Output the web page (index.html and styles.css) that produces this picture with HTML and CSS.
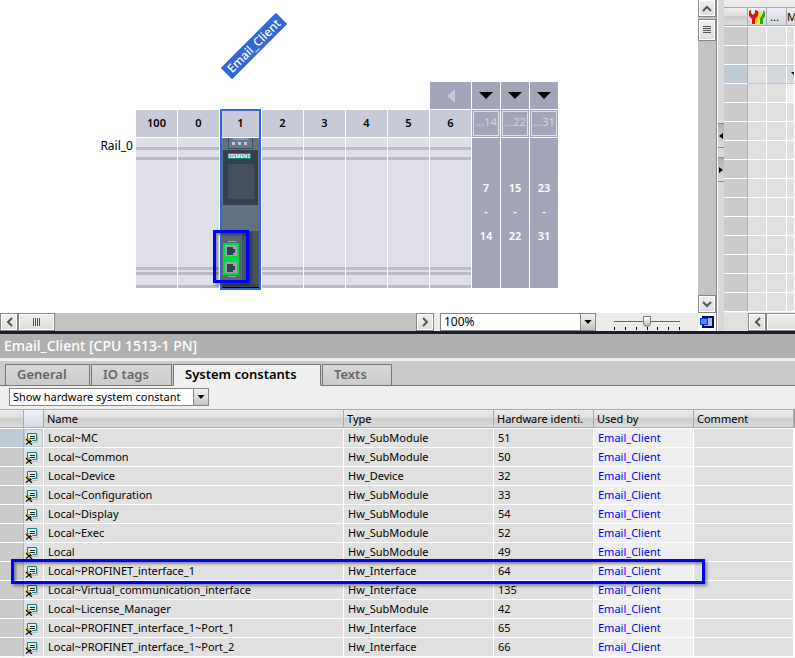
FILE: index.html
```html
<!DOCTYPE html>
<html lang="en">
<head>
    <meta charset="UTF-8">
    <meta name="viewport" content="width=device-width, initial-scale=1.0">
    <title>Device configuration</title>
    <link rel="stylesheet" href="styles.css">
</head>
<body>
    <svg class="defs" aria-hidden="true">
        <symbol id="const" viewBox="0 0 14 14">
            <path d="M5 11.500h7.500V4" fill="none" stroke="#b9b9b9"/>
            <path d="M2.500 2.500h9v7h-4l-2 2v-2h-3z" fill="#e4eeee" stroke="#12807f"/>
            <path d="M5 5h5v1H5zM5 7h5v1H5z" fill="#222"/>
            <path d="M3 7h2v4H3zM1 8h2v2H1z" fill="#f2c200"/>
            <path d="M1 8l6 6M1 13.500l5-4" stroke="#111" stroke-width="1.300" fill="none"/>
        </symbol>
        <symbol id="down" viewBox="0 0 9 5"><path d="M0 0h9L4.500 5z"/></symbol>
    </svg>

    <div class="workspace">
        <div class="canvas">
            <div class="device-name">Email_Client</div>
            <div class="rail-name">Rail_0</div>
            <div class="rack">
                <button class="pager prev" aria-label="Previous slots"><svg width="8" height="14"><path d="M8 0v14L0 7z"/></svg></button>
                <button class="pager" aria-label="Slots 7 to 14"><svg width="14" height="7"><path d="M0 0h14L7 7z"/></svg></button>
                <button class="pager" aria-label="Slots 15 to 22"><svg width="14" height="7"><path d="M0 0h14L7 7z"/></svg></button>
                <button class="pager" aria-label="Slots 23 to 31"><svg width="14" height="7"><path d="M0 0h14L7 7z"/></svg></button>

                <div class="slot first">100</div>
                <div class="slot">0</div>
                <div class="slot">1</div>
                <div class="slot">2</div>
                <div class="slot">3</div>
                <div class="slot">4</div>
                <div class="slot">5</div>
                <div class="slot">6</div>
                <div class="range-head">...14</div>
                <div class="range-head">...22</div>
                <div class="range-head">...31</div>

                <div class="bay first"></div>
                <div class="bay"></div>
                <div class="bay module">
                    <svg width="37" height="150" viewBox="0 0 37 150" shape-rendering="crispEdges">
                        <path d="M0 0h37v150H0z" fill="#617382"/>
                        <path d="M6 0h25v11H6z" fill="#435260"/>
                        <path d="M7 0h23v10H7z" fill="#66798a"/>
                        <path d="M11 0h15v2H11z" fill="#8f9bab"/>
                        <path d="M10 4h3v3h-3zM16 4h3v3h-3zM22 4h3v3h-3z" fill="#c3c7d3"/>
                        <path d="M1 12h35v55H1z" fill="#363f50"/>
                        <path d="M6 15h23v6H6z" fill="#138585"/>
                        <text x="17" y="20" class="brand">SIEMENS</text>
                        <path d="M6 26h26v35H6z" fill="#454f60"/>
                        <path d="M0 93h20v53H0z" fill="#586873"/>
                        <path d="M20 93h17v53H20z" fill="#465461"/>
                        <path d="M0 146h37v3H0z" fill="#3b4754"/>
                        <path d="M0 149h37v1H0z" fill="#000"/>
                        <path d="M6 103h8v1H6zM6 138h8v1H6z" fill="#98a3aa"/>
                        <path d="M1 105h16v32H1z" fill="#00da3c"/>
                        <path d="M3 107h12v11H3zM3 124h12v11H3z" fill="#98a3b0"/>
                        <path d="M5 109h6v2h2v4h-2v2H5zM5 126h6v2h2v4h-2v2H5z" fill="#363f50"/>
                    </svg>
                </div>
                <div class="bay"></div>
                <div class="bay"></div>
                <div class="bay"></div>
                <div class="bay"></div>
                <div class="bay"></div>
                <div class="range"><span>7</span><span>-</span><span>14</span></div>
                <div class="range"><span>15</span><span>-</span><span>22</span></div>
                <div class="range"><span>23</span><span>-</span><span>31</span></div>
                <div class="selection"></div>
            </div>
            <div class="mark port-mark"></div>
        </div>

        <div class="vscroll">
            <button class="sb-btn up" aria-label="Scroll up"><svg width="10" height="7"><path d="M1 6l4-4 4 4"/></svg></button>
            <button class="sb-btn vthumb" aria-label="Scroll thumb"><svg class="grip" width="8" height="8"><path d="M0 .5h8M0 2.500h8M0 4.500h8M0 6.500h8"/></svg></button>
            <button class="sb-btn last" aria-label="Scroll down"><svg width="10" height="7"><path d="M1 1l4 4 4-4"/></svg></button>
        </div>

        <div class="footbar">
            <div class="hscroll">
                <button class="sb-btn" aria-label="Scroll left"><svg width="7" height="10"><path d="M6 1L2 5l4 4"/></svg></button>
                <button class="sb-btn hthumb" aria-label="Scroll thumb"><svg class="grip" width="8" height="8"><path d="M.5 0v8M2.500 0v8M4.500 0v8M6.500 0v8"/></svg></button>
                <button class="sb-btn last" aria-label="Scroll right"><svg width="7" height="10"><path d="M1 1l4 4-4 4"/></svg></button>
            </div>
            <div class="combo zoom">
                <select aria-label="Zoom"><option>100%</option></select>
                <span class="combo-arrow"><svg width="8" height="4"><use href="#down"/></svg></span>
            </div>
            <div class="slider">
                <input type="range" min="0" max="100" value="50" aria-label="Zoom level">
                <svg width="66" height="3" shape-rendering="crispEdges"><path d="M0 0h1v3H0zM11 0h1v3h-1zM22 0h1v3h-1zM33 0h1v3h-1zM43 0h1v3h-1zM54 0h1v3h-1zM65 0h1v3h-1z"/></svg>
            </div>
        </div>
        <button class="overview" aria-label="Overview">
            <svg width="16" height="15" shape-rendering="crispEdges"><path d="M3 1h12v12H3z" fill="#00105c"/><path d="M5 3h8v8H5z" fill="#b3bfe3"/><path d="M1 3h8v7H1z" fill="#0a2fff"/><path d="M2 4h6v5H2z" fill="#5f86f5"/></svg>
        </button>

        <div class="splitter">
            <button aria-label="Collapse left"><svg width="4" height="6"><path d="M4 0v6L0 3z"/></svg></button>
            <button aria-label="Collapse right"><svg width="4" height="6"><path d="M0 0v6l4-3z"/></svg></button>
        </div>

        <div class="overview-pane">
            <table class="modules">
                <colgroup><col class="c-mgutter"><col class="c-mstate"><col class="c-mstate2"><col></colgroup>
                <thead>
                    <tr>
                        <th></th>
                        <th>
                            <svg width="16" height="16" viewBox="0 0 16 16">
                                <path d="M10 1v4l2 1 2-1V1l2 2v4l-2 3v5h-3v-5l-2-3z" fill="#1fa31f"/>
                                <path d="M6 1v4l2 1 2-1V1l3 2v4l-3 3v5H7v-5L5 7z" fill="#ffe000"/>
                                <path d="M2 1v3l2 2 2-2V1l3 1v5l-3 3v5H3v-5L0 7V2z" fill="#dc1111"/>
                            </svg>
                        </th>
                        <th>...</th>
                        <th>M</th>
                    </tr>
                </thead>
                <tbody>
                    <tr><td></td><td></td><td></td><td></td></tr>
                    <tr><td></td><td></td><td></td><td></td></tr>
                    <tr class="current"><td></td><td></td><td></td><td><svg width="9" height="5"><use href="#down"/></svg></td></tr>
                    <tr><td></td><td></td><td></td><td class="editable"></td></tr>
                    <tr><td></td><td></td><td></td><td></td></tr>
                    <tr><td></td><td></td><td></td><td></td></tr>
                    <tr><td></td><td></td><td></td><td></td></tr>
                    <tr><td></td><td></td><td></td><td></td></tr>
                    <tr><td></td><td></td><td></td><td></td></tr>
                    <tr><td></td><td></td><td></td><td></td></tr>
                    <tr><td></td><td></td><td></td><td></td></tr>
                    <tr><td></td><td></td><td></td><td></td></tr>
                    <tr><td></td><td></td><td></td><td></td></tr>
                    <tr><td></td><td></td><td></td><td></td></tr>
                    <tr><td></td><td></td><td></td><td></td></tr>
                </tbody>
            </table>
            <div class="pane-scroll">
                <button class="sb-btn" aria-label="Scroll left"><svg width="7" height="10"><path d="M6 1L2 5l4 4"/></svg></button>
                <button class="sb-btn hthumb" aria-label="Scroll thumb"></button>
            </div>
        </div>
    </div>

    <div class="inspector">
        <div class="title">Email_Client [CPU 1513-1 PN]</div>
        <div class="tabs">
            <button class="tab t-general">General</button>
            <button class="tab t-io">IO tags</button>
            <button class="tab t-const active">System constants</button>
            <button class="tab t-texts">Texts</button>
        </div>
        <div class="toolbar">
            <div class="combo filter">
                <select aria-label="Filter"><option>Show hardware system constant</option></select>
                <span class="combo-arrow"><svg width="8" height="4"><use href="#down"/></svg></span>
            </div>
        </div>
        <div class="table-wrap">
            <table class="constants">
                <colgroup><col class="c-gutter"><col class="c-icon"><col class="c-name"><col class="c-type"><col class="c-id"><col class="c-id"><col class="c-id"><col></colgroup>
                <thead>
                    <tr><th></th><th></th><th>Name</th><th>Type</th><th>Hardware identi.</th><th>Used by</th><th>Comment</th><th></th></tr>
                </thead>
                <tbody>
                    <tr class="current"><td></td><td><svg><use href="#const"/></svg></td><td>Local~MC</td><td>Hw_SubModule</td><td>51</td><td><a href="#">Email_Client</a></td><td></td><td></td></tr>
                    <tr><td></td><td><svg><use href="#const"/></svg></td><td>Local~Common</td><td>Hw_SubModule</td><td>50</td><td><a href="#">Email_Client</a></td><td></td><td></td></tr>
                    <tr><td></td><td><svg><use href="#const"/></svg></td><td>Local~Device</td><td>Hw_Device</td><td>32</td><td><a href="#">Email_Client</a></td><td></td><td></td></tr>
                    <tr><td></td><td><svg><use href="#const"/></svg></td><td>Local~Configuration</td><td>Hw_SubModule</td><td>33</td><td><a href="#">Email_Client</a></td><td></td><td></td></tr>
                    <tr><td></td><td><svg><use href="#const"/></svg></td><td>Local~Display</td><td>Hw_SubModule</td><td>54</td><td><a href="#">Email_Client</a></td><td></td><td></td></tr>
                    <tr><td></td><td><svg><use href="#const"/></svg></td><td>Local~Exec</td><td>Hw_SubModule</td><td>52</td><td><a href="#">Email_Client</a></td><td></td><td></td></tr>
                    <tr><td></td><td><svg><use href="#const"/></svg></td><td>Local</td><td>Hw_SubModule</td><td>49</td><td><a href="#">Email_Client</a></td><td></td><td></td></tr>
                    <tr><td></td><td><svg><use href="#const"/></svg></td><td>Local~PROFINET_interface_1</td><td>Hw_Interface</td><td>64</td><td><a href="#">Email_Client</a></td><td></td><td></td></tr>
                    <tr><td></td><td><svg><use href="#const"/></svg></td><td>Local~Virtual_communication_interface</td><td>Hw_Interface</td><td>135</td><td><a href="#">Email_Client</a></td><td></td><td></td></tr>
                    <tr><td></td><td><svg><use href="#const"/></svg></td><td>Local~License_Manager</td><td>Hw_SubModule</td><td>42</td><td><a href="#">Email_Client</a></td><td></td><td></td></tr>
                    <tr><td></td><td><svg><use href="#const"/></svg></td><td>Local~PROFINET_interface_1~Port_1</td><td>Hw_Interface</td><td>65</td><td><a href="#">Email_Client</a></td><td></td><td></td></tr>
                    <tr><td></td><td><svg><use href="#const"/></svg></td><td>Local~PROFINET_interface_1~Port_2</td><td>Hw_Interface</td><td>66</td><td><a href="#">Email_Client</a></td><td></td><td></td></tr>
                </tbody>
            </table>
            <div class="mark row-mark"></div>
        </div>
    </div>
</body>
</html>
```
FILE: styles.css
```css
* {
    box-sizing: border-box;
}
body {
    margin: 0;
    overflow: hidden;
    background-color: #efefef;
    color: #000;
    font-family: "Noto Sans", "Open Sans", sans-serif;
    font-size: 11px;
    line-height: 16px;
}
button, select {
    font: inherit;
    padding: 0;
    margin: 0;
    border: 0;
    border-radius: 0;
}
svg {
    display: block;
}
.defs {
    position: absolute;
    width: 0;
    height: 0;
}

/* upper half: rack view, scrollbars, module overview */
.workspace {
    display: grid;
    grid-template-columns: 1fr 19px 7px 71px;
    grid-template-rows: 313px 18px;
    border-bottom: 3px solid #1c1c2e;
}
.canvas {
    position: relative;
    display: flex;
    background-color: #fff;
    padding-top: 82px;
    overflow: hidden;
}
.device-name {
    position: absolute;
    left: 215px;
    top: 38px;
    width: 78px;
    height: 16px;
    text-align: center;
    font-size: 12px;
    font-weight: 500;
    color: #fff;
    background-color: #3366d6;
    transform: rotate(-45deg);
}
.rail-name {
    width: 136px;
    padding: 56px 3px 0 0;
    text-align: right;
    font-size: 12px;
}
.rack {
    position: relative;
    display: grid;
    grid-template-columns: repeat(8, 41px) repeat(3, 28px);
    grid-template-rows: 27px 27px 150px;
    gap: 1px;
    align-content: start;
}
.pager {
    display: flex;
    align-items: center;
    justify-content: center;
    background-color: #a3a5b8;
}
.pager.prev {
    grid-column: 8;
}
.pager.prev svg {
    fill: #c9cad8;
}
.slot {
    background-color: #c9cad8;
    text-align: center;
    font-weight: 600;
    line-height: 26px;
}
.first {
    grid-column: 1;
}
.range-head {
    background-color: #a3a5b8;
    box-shadow: inset 0 0 0 1px #a3a5b8, inset 0 0 0 2px #dfdfe8;
    color: #d6d7e0;
    text-align: center;
    line-height: 24px;
}
.bay {
    background: linear-gradient(#dfdfe8 9px, #b9b9c8 9px 12px, #dfdfe8 12px 19px, #b9b9c8 19px 22px, #dfdfe8 22px 129px, #b9b9c8 129px 132px, #dfdfe8 132px 134px, #b9b9c8 134px 137px, #dfdfe8 137px 147px, #b9b9c8 147px);
}
.bay.module {
    padding-left: 2px;
}
.brand {
    font-size: 5px;
    font-weight: 800;
    fill: #fff;
    text-anchor: middle;
}
.range {
    display: flex;
    flex-direction: column;
    align-items: center;
    gap: 8px;
    padding-top: 42px;
    background-color: #a3a5b8;
    color: #fff;
    font-weight: 600;
}
.selection {
    position: absolute;
    inset: -1px 0 -2px;
    grid-column: 3 / 4;
    grid-row: 2 / 4;
    border: 2px solid #3366d6;
}
.mark {
    position: absolute;
    border: 3px solid #0000ff;
    box-shadow: 2px 2px 3px rgba(0, 0, 0, 0.4), inset 2px 2px 3px rgba(0, 0, 0, 0.4);
    pointer-events: none;
}
.port-mark {
    left: 213px;
    top: 230px;
    width: 36px;
    height: 53px;
}

/* scrollbars */
.vscroll {
    display: flex;
    flex-direction: column;
    background-color: #c3c3c3;
    border-right: 1px solid #878787;
}
.sb-btn {
    display: flex;
    align-items: center;
    justify-content: center;
    flex: none;
    width: 18px;
    height: 18px;
    background: linear-gradient(#efefef, #dcdcdc);
    border: 1px solid #878787;
    box-shadow: inset 0 0 0 1px #fff;
}
.sb-btn svg {
    fill: none;
    stroke: #555;
    stroke-width: 2;
}
.sb-btn .grip {
    stroke-width: 1;
}
.sb-btn.up {
    height: 17px;
    border-top: 0;
}
.vthumb {
    height: 22px;
    margin-top: 2px;
}
.vscroll .last {
    margin-top: auto;
}
.footbar {
    grid-column: 1;
    display: flex;
    background-color: #ebebeb;
}
.hscroll {
    flex: 1;
    display: flex;
    background-color: #c3c3c3;
}
.hthumb {
    width: 37px;
}
.hscroll .last {
    margin-left: auto;
}
.combo {
    display: flex;
    height: 18px;
    border: 1px solid #878787;
    background-color: #fff;
}
.combo select {
    appearance: none;
    flex: 1;
    min-width: 0;
    padding-left: 3px;
    background: #fff;
    color: #000;
}
.combo-arrow {
    display: flex;
    align-items: center;
    justify-content: center;
    width: 15px;
    border-left: 1px solid #878787;
    background: linear-gradient(#f2f2f2, #c4c4c4);
}
.zoom {
    width: 156px;
    margin-left: 6px;
    font-size: 12px;
}
.slider {
    width: 66px;
    margin: 0 18px;
}
.slider input {
    appearance: none;
    display: block;
    width: 66px;
    height: 14px;
    margin: 0;
    background: linear-gradient(transparent 8px, #666 8px 9px, transparent 9px);
}
.slider input::-webkit-slider-thumb {
    appearance: none;
    width: 8px;
    height: 11px;
    margin-top: 3px;
    background: linear-gradient(#fff, #bbb);
    border: 1px solid #777;
    border-radius: 0 0 4px 4px;
}
.overview {
    display: flex;
    align-items: center;
    justify-content: center;
    background-color: #fff;
    border-right: 1px solid #878787;
}

.splitter {
    grid-column: 3;
    grid-row: 1 / 3;
    display: flex;
    flex-direction: column;
    gap: 9px;
    padding-top: 123px;
    background-color: #d9d9d9;
    border-left: 1px solid #fff;
}
.splitter button {
    display: flex;
    align-items: center;
    height: 25px;
    padding-left: 1px;
    background: linear-gradient(#b0b0b0, #dedede);
    border-top: 1px solid #878787;
    border-bottom: 1px solid #878787;
}

/* module overview */
.overview-pane {
    grid-column: 4;
    grid-row: 1 / 3;
    padding-top: 7px;
    overflow: hidden;
    background-color: #ebebeb;
}
table {
    width: 100%;
    table-layout: fixed;
    border-collapse: separate;
    border-spacing: 0;
}
th {
    height: 19px;
    padding: 0 0 0 3px;
    overflow: hidden;
    white-space: nowrap;
    text-align: left;
    font-weight: 400;
    background: linear-gradient(#ececec, #dedede 45%, #cccccc 50%, #dcdcdc);
    border-top: 1px solid #aaa;
    border-bottom: 1px solid #aaa;
    border-right: 1px solid #aaa;
}
td {
    height: 19px;
    padding: 0 0 0 4px;
    overflow: hidden;
    white-space: nowrap;
    background-color: #e0e0e0;
    border-right: 1px solid #fff;
    border-bottom: 1px solid #fff;
}
td:first-child {
    background-color: #cbcbcb;
    border-right-color: #b0b0b0;
}
.c-mgutter {
    width: 24px;
}
.c-mstate {
    width: 19px;
}
.c-mstate2 {
    width: 20px;
}
.modules th + th {
    background: linear-gradient(#eceff2, #d2d8de);
}
.modules th:nth-child(2) {
    padding: 0 0 0 1px;
}
.modules th:last-child {
    padding: 0;
    border-right: 0;
}
.modules tbody tr:first-child td {
    height: 20px;
    border-top: 1px solid #fff;
}
.modules .current td {
    background-color: #d2d8de;
}
.modules .current td:first-child {
    background-color: #c0cad6;
}
.modules .current td:nth-child(2) {
    background-color: #e0e0e0;
}
.modules .current td + td {
    border-top: 1px solid #b9c6d4;
    border-bottom-color: #b9c6d4;
}
.modules .editable {
    background-color: #efefef;
}
.pane-scroll {
    display: flex;
    margin-top: 1px;
    padding-left: 24px;
    background-color: #e0e0e0;
}

/* inspector window */
.title {
    height: 24px;
    padding-left: 4px;
    background-color: #b0b0b0;
    color: #fff;
    font-size: 14px;
    font-weight: 500;
    line-height: 24px;
}
.tabs {
    display: flex;
    gap: 1px;
    height: 28px;
    padding: 3px 0 0 5px;
    background-color: #cbcbcb;
    border-top: 3px solid #efefef;
    box-shadow: inset 0 -1px #777;
}
.tab {
    height: 22px;
    padding: 0 0 2px 11px;
    text-align: left;
    font-size: 13px;
    font-weight: 600;
    line-height: 18px;
    color: #666;
    background: linear-gradient(#d8d8d8, #cbcbcb);
    border: 1px solid #777;
}
.tab.active {
    color: #000;
    background: #efefef;
    border-bottom-color: #efefef;
}
.t-general {
    width: 85px;
}
.t-io {
    width: 81px;
}
.t-const {
    width: 148px;
}
.t-texts {
    width: 70px;
}
.toolbar {
    height: 23px;
    padding: 2px 0 0 9px;
}
.filter {
    width: 200px;
}
.table-wrap {
    position: relative;
}
.constants tbody tr:first-child td {
    height: 20px;
    border-top: 1px solid #fff;
}
.constants td:nth-child(2) {
    padding: 0 0 0 1px;
}
.constants th:nth-child(2) {
    background: linear-gradient(#eef2f8, #d4dbe6);
}
.constants td svg {
    width: 14px;
    height: 14px;
}
.constants td:nth-child(6) {
    background-color: #efefef;
}
.constants .current td:first-child {
    background-color: #c0cad6;
}
.constants .current td:nth-child(2) {
    box-shadow: inset 0 0 0 1px #b9c6d4;
}
.c-gutter {
    width: 24px;
}
.c-icon {
    width: 20px;
}
.c-name {
    width: 300px;
}
.c-type {
    width: 150px;
}
.c-id {
    width: 100px;
}
a {
    color: #0000ff;
    text-decoration: none;
}
.row-mark {
    left: 11px;
    top: 150px;
    width: 694px;
    height: 25px;
}
```
